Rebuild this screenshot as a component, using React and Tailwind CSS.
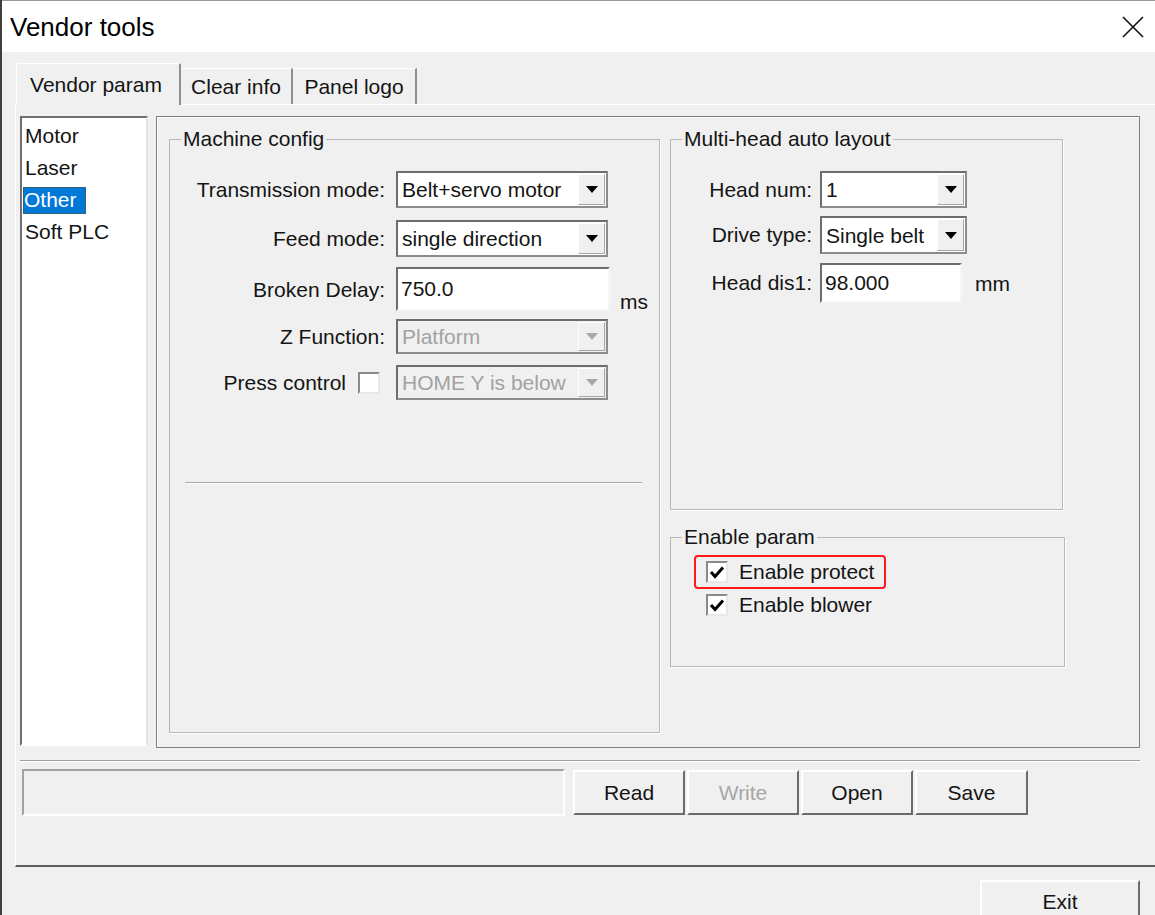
import React from "react";

const Arrow = ({ disabled }) => (
  <span className="w-[27px] my-[1px] mr-[1px] flex items-center justify-center bg-[#f0f0f0] border border-t-white border-l-white border-r-[#a5a5a5] border-b-[#a5a5a5]">
    <svg width="12" height="7" viewBox="0 0 12 7">
      <path d="M0 0h12L6 7z" fill={disabled ? "#a9a9a9" : "#000"} />
    </svg>
  </span>
);

const Combo = ({ value, className, disabled }) => (
  <div
    className={`flex items-stretch border-2 border-[#8c8c8c] border-t-[#6e6e6e] border-l-[#6e6e6e] ${
      disabled ? "bg-[#f0f0f0] text-[#a2a2a2]" : "bg-white"
    } ${className}`}
  >
    <span className="flex-1 flex items-center pl-[4px] pt-[1px] whitespace-nowrap overflow-hidden">{value}</span>
    <Arrow disabled={disabled} />
  </div>
);

const Input = ({ value, className }) => (
  <div
    className={`flex items-center bg-white border-2 border-t-[#6e6e6e] border-l-[#6e6e6e] border-r-[#f6f6f6] border-b-[#f6f6f6] pl-[3px] ${className}`}
  >
    {value}
  </div>
);

const Check = ({ checked }) => (
  <span className="w-[22px] h-[22px] shrink-0 bg-white border-2 border-t-[#8a8a8a] border-l-[#8a8a8a] border-r-[#e8e8e8] border-b-[#e8e8e8] flex items-center justify-center">
    {checked && (
      <svg width="16" height="14" viewBox="0 0 16 14">
        <path d="M2 7 L6 11.5 L14 2.5" fill="none" stroke="#000" strokeWidth="3" />
      </svg>
    )}
  </span>
);

const Button = ({ label, disabled, className }) => (
  <div
    className={`flex items-center justify-center bg-[#f0f0f0] border-2 border-t-white border-l-white border-r-[#6b6b6b] border-b-[#6b6b6b] ${
      disabled ? "text-[#a6a6a6]" : ""
    } ${className}`}
  >
    {label}
  </div>
);

const Group = ({ title, className, children }) => (
  <fieldset className={`border border-[#b8b8b8] shadow-[1px_1px_0_#fff] ${className}`}>
    <legend className="ml-[11px] px-[2px] leading-[24px]">{title}</legend>
    {children}
  </fieldset>
);

export default function App() {
  const items = ["Motor", "Laser", "Other", "Soft PLC"];

  return (
    <div className="w-[1155px] h-[915px] overflow-hidden bg-[#f0f0f0] border-l-2 border-[#3f3f3f] font-['Liberation_Sans',Arial,sans-serif] text-[21px] leading-[24px] text-[#141414]">
      {/* title bar */}
      <div className="h-[52px] bg-white border-t border-[#9a9a9a] flex items-center justify-between pl-[8px] pr-[11px]">
        <span className="text-[26px] leading-[30px] text-black">Vendor tools</span>
        <svg width="22" height="22" viewBox="0 0 22 22">
          <path d="M1 1 L21 21 M21 1 L1 21" stroke="#111" strokeWidth="1.6" />
        </svg>
      </div>

      {/* tabs */}
      <div className="ml-[14px] mt-[11px] h-[41px] flex items-end">
        <div className="relative z-10 -mb-px w-[165px] h-[42px] flex items-center justify-center pr-[4px] bg-[#f0f0f0] border-t border-l border-white border-r-2 border-r-[#8f8f8f] rounded-t-[2px]">
          Vendor param
        </div>
        <div className="w-[112px] h-[36px] flex items-center justify-center border-t border-white border-r-2 border-r-[#8f8f8f]">
          Clear info
        </div>
        <div className="w-[124px] h-[36px] flex items-center justify-center border-t border-white border-r-2 border-r-[#8f8f8f]">
          Panel logo
        </div>
      </div>

      {/* tab page */}
      <div className="ml-[13px] h-[763px] border-l border-t border-white border-b-2 border-b-[#5f5f5f] pl-[4px] pt-[11px]">
        <div className="flex gap-[8px]">
          {/* list box */}
          <div className="w-[128px] h-[630px] bg-white border-2 border-t-[#6f6f6f] border-l-[#6f6f6f] border-r-[#e4e4e4] border-b-[#ffffff] pl-[3px] pt-[2px]">
            {items.map((item) => (
              <div key={item} className="h-[32px] flex items-center">
                {item === "Other" ? (
                  <span className="-ml-[2px] w-[63px] h-[27px] flex items-center px-[1px] bg-[#0078d7] text-white outline-1 outline-dotted outline-[#6a4a1a] -outline-offset-1">
                    {item}
                  </span>
                ) : (
                  item
                )}
              </div>
            ))}
          </div>

          {/* panel */}
          <div className="w-[984px] h-[632px] border border-[#7f7f7f] shadow-[inset_1px_1px_0_#fff] pl-[12px] pt-[10px] flex gap-[10px]">
            <Group title="Machine config" className="w-[491px] h-[606px]">
              <div className="flex items-center h-[37px] mt-[20px]">
                <span className="w-[215px] text-right">Transmission mode:</span>
                <Combo value="Belt+servo motor" className="ml-[11px] w-[212px] h-[37px]" />
              </div>
              <div className="flex items-center h-[37px] mt-[12px]">
                <span className="w-[215px] text-right">Feed mode:</span>
                <Combo value="single direction" className="ml-[11px] w-[212px] h-[37px]" />
              </div>
              <div className="flex items-center h-[44px] mt-[10px]">
                <span className="w-[215px] text-right pt-[2px]">Broken Delay:</span>
                <Input value="750.0" className="ml-[11px] w-[214px] h-[44px]" />
                <span className="self-end ml-[10px] mb-[-3px]">ms</span>
              </div>
              <div className="flex items-center h-[35px] mt-[8px]">
                <span className="w-[215px] text-right">Z Function:</span>
                <Combo value="Platform" disabled className="ml-[11px] w-[212px] h-[35px]" />
              </div>
              <div className="flex items-center h-[35px] mt-[11px]">
                <span className="w-[215px] flex items-center justify-end gap-[12px] pr-[5px]">
                  Press control
                  <Check />
                </span>
                <Combo value="HOME Y is below" disabled className="ml-[11px] w-[212px] h-[35px]" />
              </div>
              <div className="ml-[15px] mt-[82px] w-[457px] h-[2px] border-t border-[#a8a8a8] border-b border-b-white" />
            </Group>

            <div className="flex flex-col">
              <Group title="Multi-head auto layout" className="w-[393px] h-[383px]">
                <div className="flex items-center h-[37px] mt-[20px]">
                  <span className="w-[141px] text-right">Head num:</span>
                  <Combo value="1" className="ml-[8px] w-[147px] h-[37px]" />
                </div>
                <div className="flex items-center h-[38px] mt-[8px]">
                  <span className="w-[141px] text-right">Drive type:</span>
                  <Combo value="Single belt" className="ml-[8px] w-[147px] h-[38px]" />
                </div>
                <div className="flex items-center h-[40px] mt-[9px]">
                  <span className="w-[141px] text-right">Head dis1:</span>
                  <Input value="98.000" className="ml-[8px] w-[142px] h-[40px]" />
                  <span className="ml-[13px] pt-[2px]">mm</span>
                </div>
              </Group>

              <Group title="Enable param" className="mt-[15px] w-[395px] h-[142px]">
                <div className="ml-[23px] mt-[6px] w-[192px] h-[34px] border-2 border-[#ff1a1a] rounded-[4px] flex items-center pl-[10px] gap-[11px]">
                  <Check checked />
                  <span className="whitespace-nowrap">Enable protect</span>
                </div>
                <div className="ml-[35px] h-[32px] flex items-center gap-[11px]">
                  <Check checked />
                  <span>Enable blower</span>
                </div>
              </Group>
            </div>
          </div>
        </div>

        <div className="mt-[12px] w-[1120px] h-[2px] border-t border-[#a0a0a0] border-b border-b-white" />

        <div className="mt-[7px] flex items-start">
          <div className="ml-[2px] w-[543px] h-[47px] border-2 border-t-[#a3a3a3] border-l-[#a3a3a3] border-r-white border-b-white" />
          <div className="ml-[8px] mt-[1px] flex gap-[2px]">
            <Button label="Read" className="w-[112px] h-[45px]" />
            <Button label="Write" disabled className="w-[112px] h-[45px]" />
            <Button label="Open" className="w-[112px] h-[45px]" />
            <Button label="Save" className="w-[113px] h-[45px]" />
          </div>
        </div>
      </div>

      {/* exit */}
      <div className="flex justify-end pr-[15px] pt-[13px]">
        <Button label="Exit" className="w-[160px] h-[44px]" />
      </div>
    </div>
  );
}
